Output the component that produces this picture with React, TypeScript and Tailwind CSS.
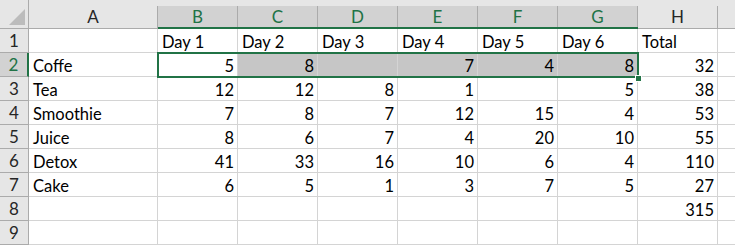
import React from "react";

const cols = ["A", "B", "C", "D", "E", "F", "G", "H"];
const selCols = new Set(["B", "C", "D", "E", "F", "G"]);

type Cell = string | number | null;
const data: Cell[][] = [
  [null, "Day 1", "Day 2", "Day 3", "Day 4", "Day 5", "Day 6", "Total"],
  ["Coffe", 5, 8, null, 7, 4, 8, 32],
  ["Tea", 12, 12, 8, 1, null, 5, 38],
  ["Smoothie", 7, 8, 7, 12, 15, 4, 53],
  ["Juice", 8, 6, 7, 4, 20, 10, 55],
  ["Detox", 41, 33, 16, 10, 6, 4, 110],
  ["Cake", 6, 5, 1, 3, 7, 5, 27],
  [null, null, null, null, null, null, null, 315],
  [null, null, null, null, null, null, null, null],
];

export default function App() {
  return (
    <div
      className="relative w-[735px] h-[245px] overflow-hidden bg-white text-[16.5px] leading-[20px] text-black"
      style={{ fontFamily: "Lato, 'Noto Sans', sans-serif" }}
    >
      <div className="grid grid-cols-[29px_129px_repeat(7,80px)_1fr] grid-rows-[29px_repeat(9,24px)]">
        {/* corner */}
        <div className="relative bg-[#e6e6e6] border-b border-[#ababab] border-r border-r-[#ababab]">
          <svg className="absolute right-[3px] bottom-[3px]" width="16" height="16" viewBox="0 0 16 16">
            <polygon points="16,0 16,16 0,16" fill="#bcbcbc" />
          </svg>
        </div>
        {cols.map((c) => {
          const sel = selCols.has(c);
          return (
            <div
              key={c}
              className={
                "flex flex-col bg-[#e6e6e6] " +
                (sel ? "" : "border-b border-[#ababab]")
              }
            >
              <div className="h-[6px] bg-[#e6e6e6]" />
              <div
                className={
                  "flex-1 flex items-center justify-center border-r border-[#ababab] text-[17px] " +
                  (sel ? "bg-[#d2d2d2] text-[#217346]" : "text-[#262626]")
                }
              >
                {c}
              </div>
              {sel && <div className="h-[2px] bg-[#217346]" />}
            </div>
          );
        })}
        <div className="flex flex-col bg-[#e6e6e6] border-b border-[#ababab]">
          <div className="h-[6px]" />
          <div className="flex-1" />
        </div>
        {data.map((row, ri) => {
          const rowSel = ri === 1;
          return (
            <React.Fragment key={ri}>
              <div
                className={
                  "flex items-center justify-center border-b border-[#ababab] text-[17px] " +
                  (rowSel
                    ? "bg-[#d2d2d2] text-[#217346] border-r-2 border-r-[#217346]"
                    : "bg-[#e6e6e6] text-[#262626] border-r border-r-[#ababab]")
                }
              >
                {ri + 1}
              </div>
              {row.map((v, ci) => {
                const isNum = typeof v === "number";
                const shaded = rowSel && ci >= 2 && ci <= 6;
                return (
                  <div
                    key={ci}
                    className={
                      "flex items-end border-r border-b border-[#d4d4d4] " +
                      (isNum ? "justify-end pr-[3px] " : "justify-start pl-[4px] ") +
                      (shaded ? "bg-[#c6c6c6]" : "bg-white")
                    }
                  >
                    {v ?? ""}
                  </div>
                );
              })}
              <div className="border-b border-[#d4d4d4] bg-white" />
            </React.Fragment>
          );
        })}
      </div>
      {/* selection outline */}
      <div className="absolute left-[157px] top-[52px] w-[482px] h-[26px] border-2 border-[#217346] pointer-events-none" />
      <div className="absolute left-[635px] top-[75px] w-[7px] h-[7px] bg-[#217346] border border-white" />
    </div>
  );
}
